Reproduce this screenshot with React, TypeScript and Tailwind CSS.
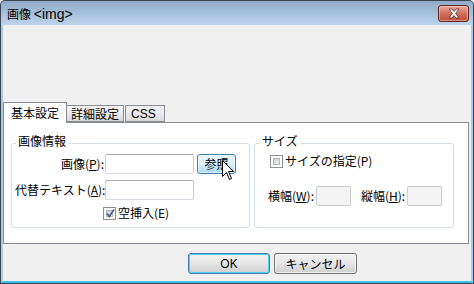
import React from "react";

const inputCls =
  "h-[20px] bg-white border border-[#abadb3] border-t-[#a4a8ae] border-b-[#d9dde3] border-x-[#c9cdd3] rounded-[2px]";

function Checkbox({ checked }: { checked?: boolean }) {
  return (
    <div className="relative w-[13px] h-[13px] border border-[#8e8f8f] bg-white p-[2px] shrink-0">
      <div className="w-full h-full bg-gradient-to-br from-[#cbcfd5] to-[#f6f6f6] border border-[#aeb3b9]" />
      {checked && (
        <svg className="absolute left-[1px] top-[0px]" width="11" height="11" viewBox="0 0 11 11">
          <path d="M2 5.5 L4.3 8.5 L9 1.5" fill="none" stroke="#4a5f97" strokeWidth="1.8" />
        </svg>
      )}
    </div>
  );
}

function Group({
  title,
  width,
  children,
  legendLeft,
}: {
  title: string;
  width: string;
  children: React.ReactNode;
  legendLeft: string;
}) {
  return (
    <div className={`relative ${width} h-[85px] border border-[#d5dfe5] rounded-[3px]`}>
      <span className={`absolute ${legendLeft} top-[-10px] bg-white px-[2px] leading-[14px]`}>{title}</span>
      {children}
    </div>
  );
}

export default function App() {
  return (
    <div className="w-[474px] h-[284px] bg-[#3a4552] p-[1px] font-['Noto_Sans_CJK_JP','Liberation_Sans',sans-serif] text-[12px] leading-[14px] text-black rounded-t-[5px] overflow-hidden">
      <div className="flex flex-col h-full">
        {/* title bar */}
        <div className="h-[24px] flex items-start justify-between bg-gradient-to-b from-[#90abc9] to-[#bdd4eb] rounded-t-[4px]">
          <span className="pl-[6px] pt-[6px] text-[12px] leading-[14px] whitespace-pre">
            画像 <span className="font-['Liberation_Sans',sans-serif] text-[14px]">&lt;img&gt;</span>
          </span>
          <div className="mt-[4px] mr-[4px] w-[31px] h-[17px] rounded-[3px] border border-[#5e2620] bg-gradient-to-b from-[#e9aa9c] via-[#d0705f] to-[#c04a35] flex items-center justify-center shadow-[inset_0_0_0_1px_rgba(255,220,210,0.5)]">
            <svg width="14" height="11" viewBox="0 0 14 11">
              <path
                d="M2 1 H5 L7 3.5 L9 1 H12 L8.6 5.5 L12 10 H9 L7 7.5 L5 10 H2 L5.4 5.5 Z"
                fill="#ffffff"
                stroke="#5a3a36"
                strokeWidth="0.9"
              />
            </svg>
          </div>
        </div>
        {/* body */}
        <div className="flex-1 flex flex-col bg-[#f0f0f0] border-x-2 border-x-[#a9cbe8] border-b-2 border-b-[#3cc2e6] pt-[77px]">
          {/* tabs */}
          <div className="flex items-end mb-[-1px] relative z-10">
            <div className="w-[64px] h-[21px] bg-white border border-[#898c95] border-b-0 flex items-center justify-center">
              基本設定
            </div>
            <div className="w-[57px] h-[17px] mb-[1px] border border-[#898c95] border-l-0 bg-gradient-to-b from-[#f2f2f2] via-[#ebebeb] to-[#d8d8d8] flex items-center justify-center pt-[1px]">
              詳細設定
            </div>
            <div className="w-[40px] h-[17px] mb-[1px] ml-[1px] border border-[#898c95] bg-gradient-to-b from-[#f2f2f2] via-[#ebebeb] to-[#d8d8d8] flex items-center pl-[5px] pt-[1px] font-['Liberation_Sans',sans-serif]">
              CSS
            </div>
          </div>
          {/* panel */}
          <div className="w-[466px] h-[122px] bg-white border border-[#898c95] flex items-start pt-[20px] pl-[7px] gap-[4px]">
            <Group title="画像情報" width="w-[239px]" legendLeft="left-[4px]">
              <div className="flex flex-col pt-[10px] gap-[6px]">
                <div className="flex items-center">
                  <div className="w-[93px] text-right pr-[1px]">
                    画像(<span className="underline">P</span>):
                  </div>
                  <div className={`${inputCls} w-[89px]`} />
                  <div className="relative ml-[3px]">
                    <div className="w-[39px] h-[20px] rounded-[3px] border border-[#3c7fb1] bg-gradient-to-b from-[#eaf6fd] via-[#d9f0fc] to-[#a7d9f5] shadow-[inset_0_0_0_1px_rgba(255,255,255,0.6)] flex items-center justify-center">
                      参照
                    </div>
                    <svg className="absolute left-[25px] top-[6px]" width="13" height="21" viewBox="0 0 13 21">
                      <path
                        d="M0.5 0.5 V16.5 L4.5 12.5 L7.5 19.5 L9.5 18.5 L6.5 11.5 H11.5 Z"
                        fill="#ffffff"
                        stroke="#000000"
                        strokeWidth="1"
                        strokeLinejoin="miter"
                      />
                    </svg>
                  </div>
                </div>
                <div className="flex items-center">
                  <div className="w-[93px] pl-[3px] pr-[1px] whitespace-nowrap">
                    代替テキスト(<span className="underline">A</span>):
                  </div>
                  <div className={`${inputCls} w-[89px]`} />
                </div>
                <div className="flex items-center pl-[91px] gap-[2px]">
                  <Checkbox checked />
                  <span>空挿入(E)</span>
                </div>
              </div>
            </Group>
            <Group title="サイズ" width="w-[200px]" legendLeft="left-[5px]">
              <div className="flex flex-col pt-[10px]">
                <div className="flex items-center pl-[15px] gap-[2px]">
                  <Checkbox />
                  <span>サイズの指定(P)</span>
                </div>
                <div className="flex items-center pl-[13px] mt-[18px]">
                  <div className="w-[48px] whitespace-nowrap">
                    横幅(<span className="underline">W</span>):
                  </div>
                  <div className="w-[35px] h-[20px] bg-[#f4f4f4] border border-[#c8cbcf] rounded-[2px]" />
                  <div className="w-[46px] ml-[10px] whitespace-nowrap">
                    縦幅(<span className="underline">H</span>):
                  </div>
                  <div className="w-[35px] h-[20px] bg-[#f4f4f4] border border-[#c8cbcf] rounded-[2px]" />
                </div>
              </div>
            </Group>
          </div>
          {/* buttons */}
          <div className="flex pl-[185px] pt-[9px] gap-[4px]">
            <div className="w-[82px] h-[21px] rounded-[3px] border border-[#3c7fb1] bg-gradient-to-b from-[#f2f2f2] via-[#e6e6e6] to-[#cfcfcf] shadow-[inset_0_0_0_1px_#4fd0f5] flex items-center justify-center font-['Liberation_Sans',sans-serif]">
              OK
            </div>
            <div className="w-[83px] h-[21px] rounded-[3px] border border-[#707070] bg-gradient-to-b from-[#f2f2f2] via-[#e6e6e6] to-[#cfcfcf] shadow-[inset_0_0_0_1px_rgba(255,255,255,0.7)] flex items-center justify-center">
              キャンセル
            </div>
          </div>
        </div>
      </div>
    </div>
  );
}
